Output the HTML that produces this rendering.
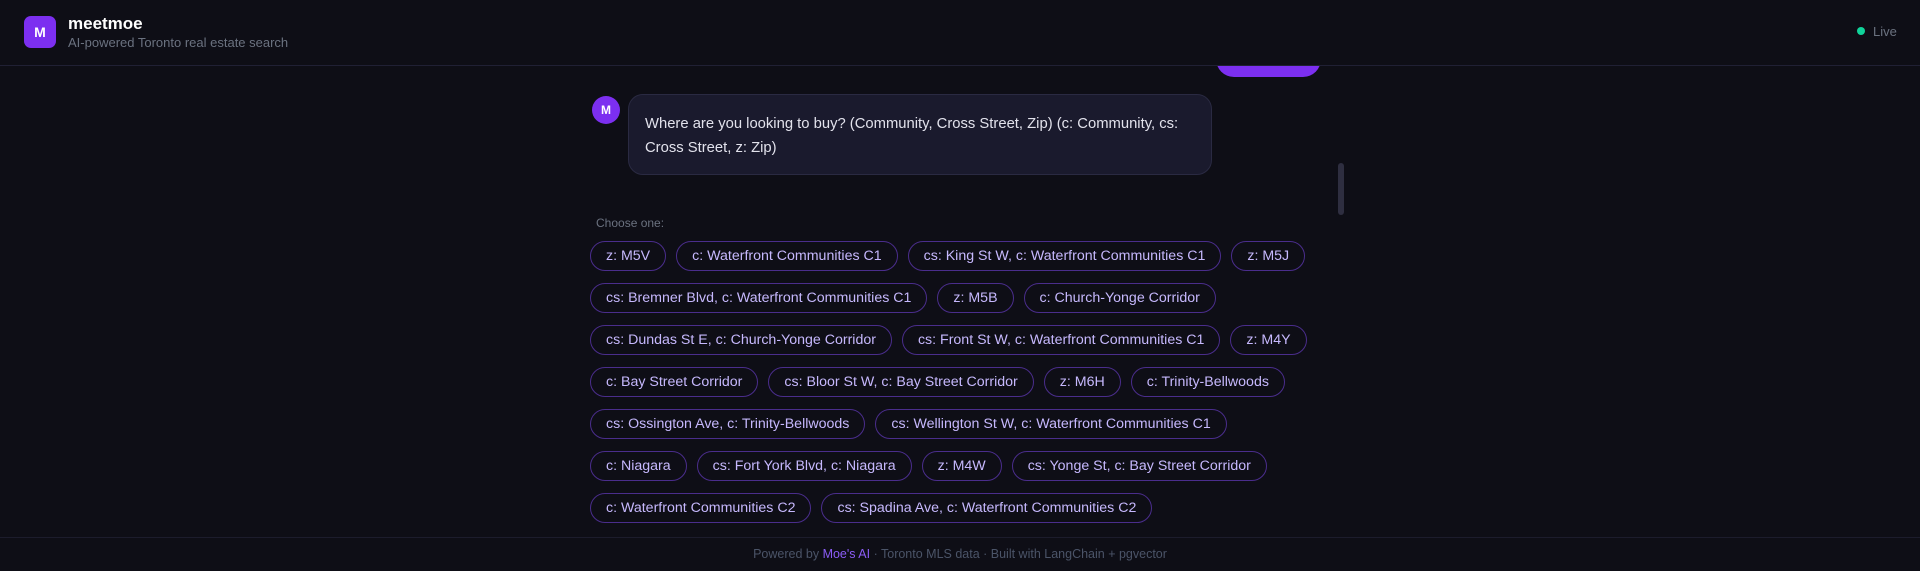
<!DOCTYPE html>
<html><head><meta charset="utf-8"><style>
*{box-sizing:border-box;margin:0;padding:0}
html,body{width:1920px;height:571px;overflow:hidden;background:#0e0e16;font-family:"Liberation Sans",sans-serif}
.hdr{position:absolute;left:0;top:0;width:1920px;height:66px;border-bottom:1px solid #202034;background:#0e0e16;z-index:2}
.logo{position:absolute;left:24px;top:16px;width:32px;height:32px;border-radius:7px;background:#7c2ff0;color:#fff;font-weight:bold;font-size:14px;text-align:center;line-height:32px}
.t1{position:absolute;left:68px;top:14px;color:#fff;font-weight:bold;font-size:17px}
.t2{position:absolute;left:68px;top:35px;color:#6b7280;font-size:13px}
.live{position:absolute;left:1857px;top:27px;width:8px;height:8px;border-radius:50%;background:#10d39a}
.livet{position:absolute;left:1873px;top:24px;color:#6b7280;font-size:13px}
.btn{position:absolute;left:1216px;top:40px;width:105px;height:37px;border-radius:18px;background:#7c2ff0}
.av{position:absolute;left:592px;top:96px;width:28px;height:28px;border-radius:50%;background:#7c2ff0;color:#fff;font-weight:bold;font-size:12px;text-align:center;line-height:28px}
.bub{position:absolute;left:628px;top:94px;width:584px;height:81px;border-radius:15px;background:#1a1a2d;border:1px solid #2a2a42;padding:17px 16px 0;color:#e2e2ec;font-size:14.8px;line-height:24px}
.sb{position:absolute;left:1338px;top:163px;width:6px;height:52px;border-radius:3px;background:#2e2e40}
.choose{position:absolute;left:596px;top:216px;color:#6b7280;font-size:12px}
.chips{position:absolute;left:590px;top:241px;width:750px}
.row{display:flex;gap:10px;margin-bottom:12px;height:30px}
.c{height:30px;border:1px solid #4a2d8c;border-radius:15px;padding:0 15px;line-height:28px;color:#c6b8fd;font-size:14.2px;white-space:nowrap}
.ft{position:absolute;left:0;top:537px;width:1920px;height:34px;border-top:1px solid #1c1c2c;text-align:center;color:#4b5468;font-size:12.5px;line-height:33px}
.ft b{font-weight:normal;color:#8b5cf6}
</style></head><body>
<div class="btn"></div>
<div class="hdr">
<div class="logo">M</div>
<div class="t1">meetmoe</div>
<div class="t2">AI-powered Toronto real estate search</div>
<div class="live"></div><div class="livet">Live</div>
</div>
<div class="av">M</div>
<div class="bub">Where are you looking to buy? (Community, Cross Street, Zip) (c: Community, cs: Cross Street, z: Zip)</div>
<div class="sb"></div>
<div class="choose">Choose one:</div>
<div class="chips">
<div class="row"><span class="c">z: M5V</span><span class="c">c: Waterfront Communities C1</span><span class="c">cs: King St W, c: Waterfront Communities C1</span><span class="c">z: M5J</span></div>
<div class="row"><span class="c">cs: Bremner Blvd, c: Waterfront Communities C1</span><span class="c">z: M5B</span><span class="c">c: Church-Yonge Corridor</span></div>
<div class="row"><span class="c">cs: Dundas St E, c: Church-Yonge Corridor</span><span class="c">cs: Front St W, c: Waterfront Communities C1</span><span class="c">z: M4Y</span></div>
<div class="row"><span class="c">c: Bay Street Corridor</span><span class="c">cs: Bloor St W, c: Bay Street Corridor</span><span class="c">z: M6H</span><span class="c">c: Trinity-Bellwoods</span></div>
<div class="row"><span class="c">cs: Ossington Ave, c: Trinity-Bellwoods</span><span class="c">cs: Wellington St W, c: Waterfront Communities C1</span></div>
<div class="row"><span class="c">c: Niagara</span><span class="c">cs: Fort York Blvd, c: Niagara</span><span class="c">z: M4W</span><span class="c">cs: Yonge St, c: Bay Street Corridor</span></div>
<div class="row"><span class="c">c: Waterfront Communities C2</span><span class="c">cs: Spadina Ave, c: Waterfront Communities C2</span></div>
</div>
<div class="ft">Powered by <b>Moe's AI</b> · Toronto MLS data · Built with LangChain + pgvector</div>
</body></html>
